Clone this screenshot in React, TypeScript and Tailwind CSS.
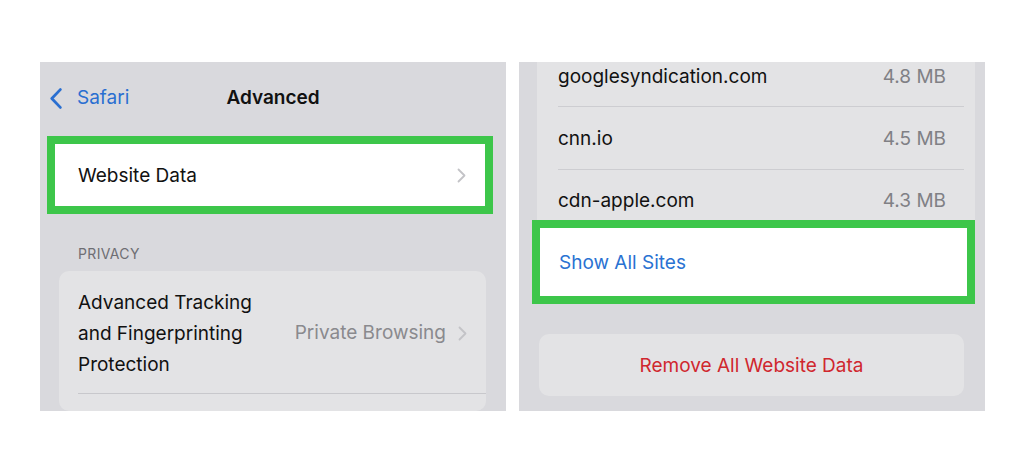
import React from 'react';

const font = { fontFamily: 'Inter, "Noto Sans", sans-serif' };

function Chevron({ className = '' }: { className?: string }) {
  return (
    <svg viewBox="0 0 9 15" className={className} fill="none">
      <polyline points="1.5,1.5 7.5,7.5 1.5,13.5" stroke="#c3c3c7" strokeWidth="1.8" strokeLinecap="round" strokeLinejoin="round" />
    </svg>
  );
}

function BackChevron() {
  return (
    <svg viewBox="0 0 12 21" className="w-[12px] h-[21px]" fill="none">
      <polyline points="10.3,1.6 1.8,10.5 10.3,19.4" stroke="#2a6fd1" strokeWidth="2.8" strokeLinecap="round" strokeLinejoin="round" />
    </svg>
  );
}

const sites = [
  { name: 'googlesyndication.com', size: '4.8 MB', h: 'h-[61px]' },
  { name: 'cnn.io', size: '4.5 MB', h: 'h-[62px]' },
  { name: 'cdn-apple.com', size: '4.3 MB', h: 'h-[60px]' },
];

function AdvancedPanel() {
  return (
    <div className="w-[466px] h-[349px] bg-[#d9d9dd] overflow-hidden flex flex-col">
      <div className="relative h-[70px] flex items-center shrink-0">
        <div className="flex items-center pl-[10px] gap-[15px] pt-[2px]">
          <BackChevron />
          <span className="text-[19px] text-[#2a6fd1]">Safari</span>
        </div>
        <span className="absolute left-0 right-0 pt-[2px] text-center text-[19px] font-semibold text-[#111]">Advanced</span>
      </div>
      <div className="mt-[4px] ml-[7px] w-[446px] h-[78px] border-[8px] border-[#3dc64a] bg-white flex items-center justify-between pl-[23px] pr-[19px] shrink-0">
        <span className="text-[19px] text-[#111] pt-[2px]">Website Data</span>
        <Chevron className="w-[9px] h-[15px]" />
      </div>
      <div className="pt-[32px] pb-[9px] pl-[38px] text-[14px] leading-[16px] text-[#6e6e73] tracking-wide shrink-0">PRIVACY</div>
      <div className="ml-[19px] w-[427px] bg-[#e3e3e5] rounded-[10px] flex-1">
        <div className="flex items-center justify-between pt-[16px] pb-[13px] pl-[19px] pr-[19px]">
          <span className="text-[19px] leading-[31px] text-[#111]">
            Advanced Tracking
            <br />
            and Fingerprinting
            <br />
            Protection
          </span>
          <div className="flex items-center gap-[12px]">
            <span className="text-[19px] text-[#8a8a8e]">Private Browsing</span>
            <Chevron className="w-[9px] h-[15px]" />
          </div>
        </div>
        <div className="ml-[19px] h-px bg-[#c8c8cc]" />
      </div>
    </div>
  );
}

function WebsiteDataPanel() {
  return (
    <div className="w-[466px] h-[349px] bg-[#d9d9dd] overflow-hidden flex flex-col">
      <div className="-mt-[17px] ml-[18px] w-[438px] bg-[#e3e3e5]">
        {sites.map((s, i) => (
          <div key={s.name}>
            {i > 0 && <div className="ml-[21px] mr-[11px] h-px bg-[#cdcdd1]" />}
            <div className={`${s.h} flex items-center justify-between pl-[21px] pr-[29px] pt-[3px]`}>
              <span className="text-[19px] text-[#111]">{s.name}</span>
              <span className="text-[19px] text-[#808085]">{s.size}</span>
            </div>
          </div>
        ))}
      </div>
      <div className="relative -mt-[10px] ml-[13px] w-[443px] h-[84px] border-[8px] border-[#3dc64a] bg-white flex items-center pl-[19px] pt-[2px] shrink-0">
        <span className="text-[19px] text-[#2a72d2]">Show All Sites</span>
      </div>
      <div className="mt-[30px] ml-[20px] w-[425px] h-[62px] rounded-[10px] bg-[#e3e3e5] flex items-center justify-center pt-[3px] shrink-0">
        <span className="text-[19px] text-[#d0272e]">Remove All Website Data</span>
      </div>
    </div>
  );
}

export default function App() {
  return (
    <div className="w-[1024px] h-[473px] bg-white pt-[62px] pl-[40px] flex gap-[13px]" style={font}>
      <AdvancedPanel />
      <WebsiteDataPanel />
    </div>
  );
}
